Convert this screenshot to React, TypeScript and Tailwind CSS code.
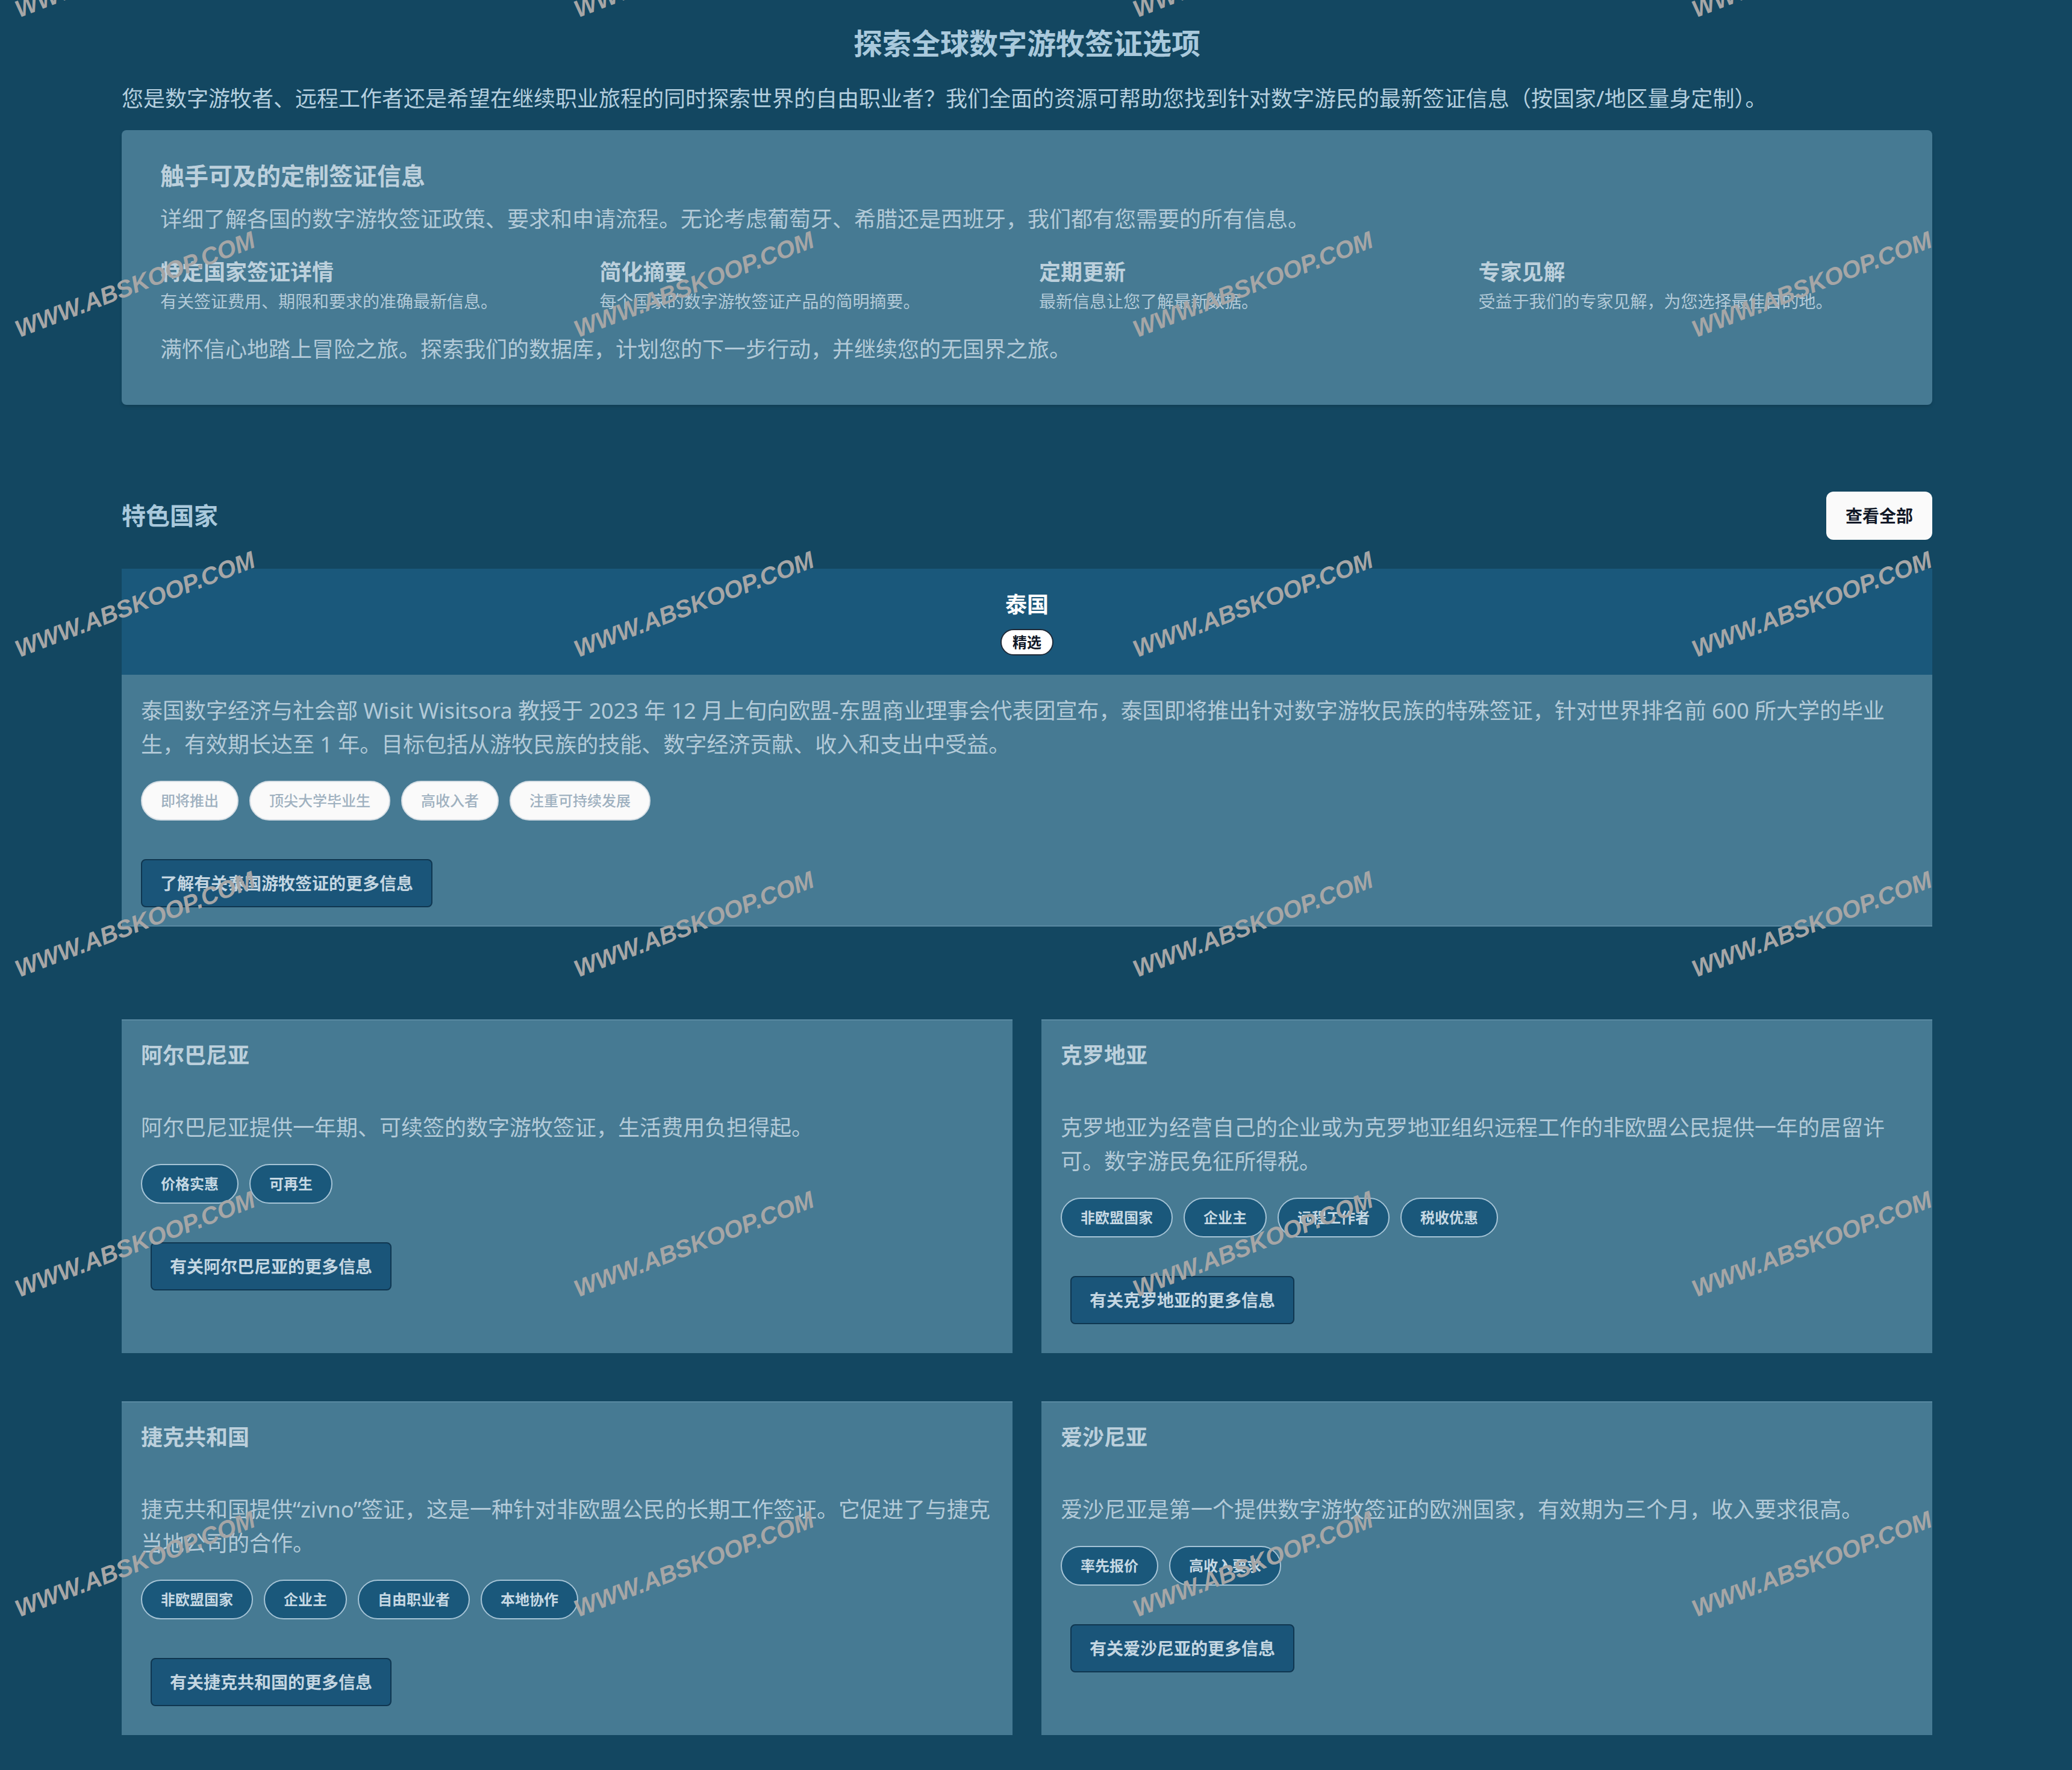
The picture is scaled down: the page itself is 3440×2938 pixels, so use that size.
import React from 'react';

type TCountry = {
  name: string;
  text: string;
  tags: string[];
  link: string;
};

const features = [
  { title: '特定国家签证详情', text: '有关签证费用、期限和要求的准确最新信息。' },
  { title: '简化摘要', text: '每个国家的数字游牧签证产品的简明摘要。' },
  { title: '定期更新', text: '最新信息让您了解最新数据。' },
  { title: '专家见解', text: '受益于我们的专家见解，为您选择最佳目的地。' },
];

const thaiTags = ['即将推出', '顶尖大学毕业生', '高收入者', '注重可持续发展'];

const countries: TCountry[] = [
  {
    name: '阿尔巴尼亚',
    text: '阿尔巴尼亚提供一年期、可续签的数字游牧签证，生活费用负担得起。',
    tags: ['价格实惠', '可再生'],
    link: '有关阿尔巴尼亚的更多信息',
  },
  {
    name: '克罗地亚',
    text: '克罗地亚为经营自己的企业或为克罗地亚组织远程工作的非欧盟公民提供一年的居留许可。数字游民免征所得税。',
    tags: ['非欧盟国家', '企业主', '远程工作者', '税收优惠'],
    link: '有关克罗地亚的更多信息',
  },
  {
    name: '捷克共和国',
    text: '捷克共和国提供“zivno”签证，这是一种针对非欧盟公民的长期工作签证。它促进了与捷克当地公司的合作。',
    tags: ['非欧盟国家', '企业主', '自由职业者', '本地协作'],
    link: '有关捷克共和国的更多信息',
  },
  {
    name: '爱沙尼亚',
    text: '爱沙尼亚是第一个提供数字游牧签证的欧洲国家，有效期为三个月，收入要求很高。',
    tags: ['率先报价', '高收入要求'],
    link: '有关爱沙尼亚的更多信息',
  },
];

// stamp grid laid over the whole page
const stamps: { x: number; y: number }[] = [];
for (let row = 0; row < 6; row++) {
  for (let col = 0; col < 4; col++) {
    stamps.push({ x: 224 + col * 928, y: -59 + row * 531 });
  }
}

const CountryCard = ({ country }: { country: TCountry }) => {
  return (
    <div className="bg-[#467a93] border-t-2 border-[#5a8aa2] px-[32px] pt-[30px] pb-[32px]">
      <h3 className="text-[36px] leading-[56px] font-bold text-[#bcd0dc]">{country.name}</h3>
      <p className="mt-[64px] text-[36px] leading-[56px] text-[#b3cad8]">{country.text}</p>
      <div className="mt-[32px] flex flex-wrap gap-[18px]">
        {country.tags.map((tag) => (
          <span
            key={tag}
            className="rounded-full border-2 border-[#a6c4d6] bg-[#1a587b] px-[31px] py-[15px] text-[24px] leading-[32px] font-semibold text-[#c6d8e3]"
          >
            {tag}
          </span>
        ))}
      </div>
      <div className="mt-[48px]">
        <button className="m-[16px] rounded-lg border-2 border-[#0f3650] bg-[#1a5579] px-[30px] py-[18px] text-[28px] leading-[40px] font-semibold text-[#c4d6e1]">
          {country.link}
        </button>
      </div>
    </div>
  );
};

const App = () => {
  return (
    <div className="relative min-h-screen overflow-hidden bg-[#134761] font-['Noto_Sans','Noto_Sans_CJK_SC',sans-serif]">
      <main className="ml-[202px] w-[3006px] pt-[40px] pb-[54px]">
        <h1 className="text-center text-[48px] leading-[64px] font-bold text-[#a9c9dc]">探索全球数字游牧签证选项</h1>
        <p className="mt-[32px] text-[36px] leading-[56px] text-[#b4cfdf]">
          您是数字游牧者、远程工作者还是希望在继续职业旅程的同时探索世界的自由职业者？我们全面的资源可帮助您找到针对数字游民的最新签证信息（按国家/地区量身定制）。
        </p>

        <section className="mt-[24px] rounded-lg bg-[#467a93] px-[64px] pt-[48px] pb-[64px] shadow-md">
          <h2 className="text-[40px] leading-[56px] font-bold text-[#bcd0dc]">触手可及的定制签证信息</h2>
          <p className="mt-[16px] text-[36px] leading-[56px] text-[#b3cad8]">
            详细了解各国的数字游牧签证政策、要求和申请流程。无论考虑葡萄牙、希腊还是西班牙，我们都有您需要的所有信息。
          </p>
          <div className="mt-[32px] grid grid-cols-4 gap-x-[40px]">
            {features.map((f) => (
              <div key={f.title}>
                <h4 className="text-[36px] leading-[56px] font-bold text-[#bcd0dc]">{f.title}</h4>
                <p className="text-[28px] leading-[40px] text-[#b3cad8]">{f.text}</p>
              </div>
            ))}
          </div>
          <p className="mt-[32px] text-[36px] leading-[56px] text-[#b3cad8]">
            满怀信心地踏上冒险之旅。探索我们的数据库，计划您的下一步行动，并继续您的无国界之旅。
          </p>
        </section>

        <div className="mt-[144px] flex h-[80px] items-center justify-between">
          <h2 className="text-[40px] leading-[56px] font-bold text-[#a9c9dc]">特色国家</h2>
          <button className="h-[80px] rounded-xl bg-[#fafafa] px-[32px] text-[28px] leading-[40px] font-semibold text-[#111827]">
            查看全部
          </button>
        </div>

        <article className="mt-[48px] bg-[#467a93]">
          <div className="flex flex-col items-center bg-[#1a587b] pt-[32px] pb-[32px]">
            <h3 className="text-[36px] leading-[56px] font-bold text-white">泰国</h3>
            <span className="mt-[12px] rounded-full border-2 border-[#1f2937] bg-white px-[18px] py-[4px] text-[24px] leading-[32px] font-bold text-[#111827]">
              精选
            </span>
          </div>
          <div className="border-b-2 border-[#5a8aa2] px-[32px] pt-[32px] pb-[30px]">
            <p className="text-[36px] leading-[56px] text-[#b3cad8]">
              泰国数字经济与社会部 Wisit Wisitsora 教授于 2023 年 12 月上旬向欧盟-东盟商业理事会代表团宣布，泰国即将推出针对数字游牧民族的特殊签证，针对世界排名前 600 所大学的毕业生，有效期长达至 1 年。目标包括从游牧民族的技能、数字经济贡献、收入和支出中受益。
            </p>
            <div className="mt-[32px] flex flex-wrap gap-[18px]">
              {thaiTags.map((tag) => (
                <span
                  key={tag}
                  className="rounded-full border-2 border-[#d4dde4] bg-[#fafafa] px-[31px] py-[15px] text-[24px] leading-[32px] font-medium text-[#9fb1c0]"
                >
                  {tag}
                </span>
              ))}
            </div>
            <button className="mt-[64px] rounded-lg border-2 border-[#0f3650] bg-[#1a5579] px-[30px] py-[18px] text-[28px] leading-[40px] font-semibold text-[#c4d6e1]">
              了解有关泰国游牧签证的更多信息
            </button>
          </div>
        </article>

        <div className="mt-[154px] grid grid-cols-2 gap-x-[48px] gap-y-[80px]">
          {countries.map((c) => (
            <CountryCard key={c.name} country={c} />
          ))}
        </div>
      </main>

      <div className="pointer-events-none absolute inset-0">
        {stamps.map((s, i) => (
          <span
            key={i}
            className="absolute -translate-x-1/2 -translate-y-1/2 -rotate-[21deg] whitespace-nowrap font-['Liberation_Sans',sans-serif] text-[40px] leading-none font-bold italic text-[#a6a6a6]"
            style={{ left: s.x, top: s.y }}
          >
            WWW.ABSKOOP.COM
          </span>
        ))}
      </div>
    </div>
  );
};

export default App;
